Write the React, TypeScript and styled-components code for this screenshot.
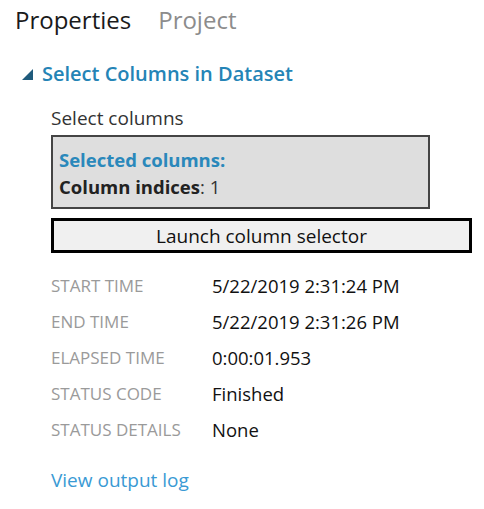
import React from "react";
import styled, { createGlobalStyle } from "styled-components";

const Global = createGlobalStyle`
  html, body { margin: 0; padding: 0; background: #ffffff; }
  body { font-family: "Open Sans", "Noto Sans", sans-serif; color: #222; }
`;

const Panel = styled.div`
  width: 484px;
  height: 509px;
  box-sizing: border-box;
  padding: 4px 0 0 15px;
`;

const Tabs = styled.div`
  display: flex;
  gap: 27px;
  height: 32px;
  line-height: 32px;
`;

const Tab = styled.div<{ $active?: boolean }>`
  font-size: 24px;
  color: ${(p) => (p.$active ? "#1a1a1a" : "#8c8c8c")};
`;

const Section = styled.div`
  margin-top: 25px;
  padding-left: 6px;
`;

const SectionHeader = styled.div`
  display: flex;
  align-items: center;
  gap: 9px;
  height: 26px;
`;

const Caret = styled.svg`
  width: 12px;
  height: 12px;
  flex: none;
`;

const SectionTitle = styled.div`
  font-size: 20px;
  line-height: 26px;
  font-weight: 600;
  color: #2484b6;
`;

const Body = styled.div`
  padding-left: 30px;
  margin-top: 19px;
`;

const FieldLabel = styled.div`
  font-size: 19px;
  line-height: 24px;
  color: #333;
`;

const SelectionBox = styled.div`
  margin-top: 5px;
  width: 379px;
  height: 74px;
  box-sizing: border-box;
  border: 2px solid #444;
  background: #dedede;
  padding: 11px 0 0 6px;
`;

const SelectionTitle = styled.div`
  font-size: 18.5px;
  font-weight: 700;
  color: #2a88bb;
  line-height: 24px;
`;

const SelectionLine = styled.div`
  margin-top: 3px;
  font-size: 18.5px;
  color: #333;
  line-height: 24px;
  b { font-weight: 700; color: #222; }
`;

const LaunchButton = styled.button`
  display: block;
  margin-top: 9px;
  width: 421px;
  height: 35px;
  box-sizing: border-box;
  border: 3px solid #000;
  background: #f0f0f0;
  font-family: inherit;
  font-size: 19px;
  line-height: 27px;
  color: #111;
  padding: 2px 0 0;
  cursor: pointer;
`;

const Details = styled.div`
  margin-top: 14px;
  display: grid;
  grid-template-columns: 161px auto;
  grid-auto-rows: 36px;
  align-items: center;
`;

const DetailLabel = styled.div`
  font-size: 17px;
  color: #9a9a9a;
  text-transform: uppercase;
`;

const DetailValue = styled.div`
  font-size: 18.5px;
  color: #111;
`;

const LogLink = styled.a`
  display: block;
  margin-top: 21px;
  font-size: 19px;
  line-height: 24px;
  color: #3a9ad4;
  text-decoration: none;
`;

const rows: [string, string][] = [
  ["Start time", "5/22/2019 2:31:24 PM"],
  ["End time", "5/22/2019 2:31:26 PM"],
  ["Elapsed time", "0:00:01.953"],
  ["Status code", "Finished"],
  ["Status details", "None"],
];

export default function App() {
  return (
    <>
      <Global />
      <Panel>
        <Tabs>
          <Tab $active>Properties</Tab>
          <Tab>Project</Tab>
        </Tabs>
        <Section>
          <SectionHeader>
            <Caret viewBox="0 0 12 12">
              <polygon points="12,1 12,12 1,12" fill="#1f5b7c" />
            </Caret>
            <SectionTitle>Select Columns in Dataset</SectionTitle>
          </SectionHeader>
          <Body>
            <FieldLabel>Select columns</FieldLabel>
            <SelectionBox>
              <SelectionTitle>Selected columns:</SelectionTitle>
              <SelectionLine>
                <b>Column indices</b>: 1
              </SelectionLine>
            </SelectionBox>
            <LaunchButton>Launch column selector</LaunchButton>
            <Details>
              {rows.map(([k, v]) => (
                <React.Fragment key={k}>
                  <DetailLabel>{k}</DetailLabel>
                  <DetailValue>{v}</DetailValue>
                </React.Fragment>
              ))}
            </Details>
            <LogLink href="#">View output log</LogLink>
          </Body>
        </Section>
      </Panel>
    </>
  );
}
